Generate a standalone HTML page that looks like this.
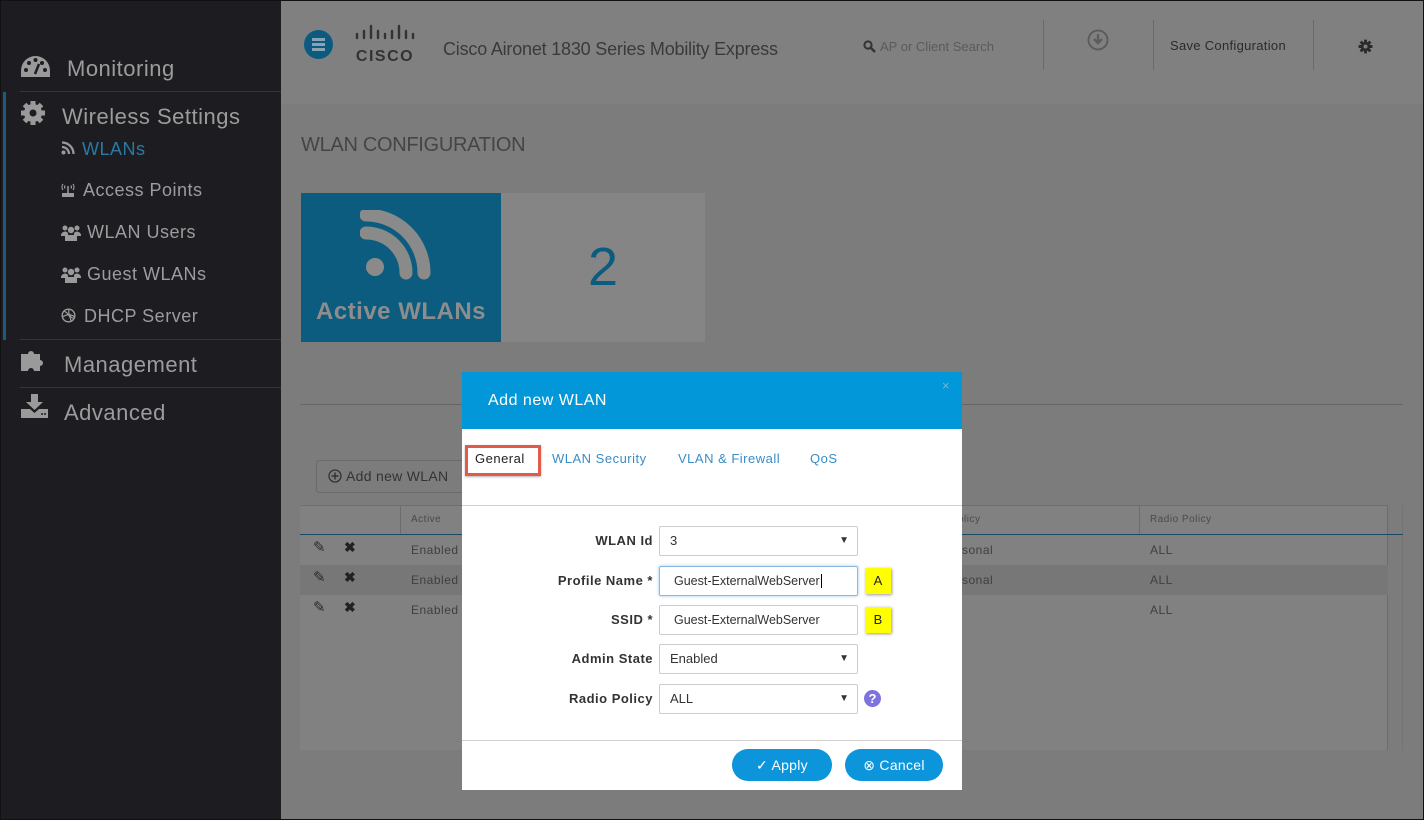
<!DOCTYPE html>
<html><head><meta charset="utf-8"><style>
*{margin:0;padding:0;box-sizing:border-box}
body{width:1424px;height:820px;overflow:hidden;background:#7c7c7c;font-family:"Liberation Sans",sans-serif;position:relative}
.a{position:absolute}
.side{left:0;top:0;width:281px;height:820px;background:#1d1d21}
.mi{position:absolute;color:#9c9c9c;font-size:22px;letter-spacing:.5px}
.si{position:absolute;color:#9c9c9c;font-size:18px;letter-spacing:.5px}
.sep{position:absolute;left:20px;width:261px;height:1px;background:#36363a}
.lab{position:absolute;width:190px;left:463px;text-align:right;font-weight:bold;font-size:13px;color:#333;letter-spacing:.5px}
.inp{position:absolute;left:659px;width:199px;height:30px;border:1px solid #ccc;border-radius:2px;background:#fff;font-size:13px;color:#333;padding-left:10px;line-height:28px}
.arr{position:absolute;right:8px;top:0;font-size:10px;color:#333}
.yb{position:absolute;left:865px;width:26px;height:26px;background:#ffff00;box-shadow:1px 1px 3px rgba(0,0,0,.4);font-size:13px;text-align:center;line-height:26px;color:#222}
.tab{position:absolute;top:451px;font-size:13px;color:#3b8cc4;letter-spacing:.5px}
.cell{position:absolute;font-size:12px;color:#3f3f3f;letter-spacing:.5px}
</style></head><body>
<div class="a side"></div>
<div class="a" style="left:3px;top:92px;width:3px;height:248px;background:#1b5b7b"></div>
<svg class="a" style="left:20px;top:55px" width="31" height="24" viewBox="0 0 31 24"><path d="M15.5 1A14.5 14.5 0 0 0 1 15.5V22h29v-6.5A14.5 14.5 0 0 0 15.5 1z" fill="#9a9a9a"/><circle cx="6" cy="15" r="2" fill="#1d1d21"/><circle cx="9" cy="8" r="2" fill="#1d1d21"/><circle cx="15.5" cy="5" r="2" fill="#1d1d21"/><circle cx="22" cy="8" r="2" fill="#1d1d21"/><circle cx="25" cy="15" r="2" fill="#1d1d21"/><path d="M15 19l4-10" stroke="#1d1d21" stroke-width="2.5"/></svg>
<div class="mi" style="left:67px;top:56px">Monitoring</div>
<div class="sep" style="top:91px"></div>
<svg class="a" style="left:20px;top:100px" width="26" height="26" viewBox="0 0 26 26"><g fill="#9a9a9a"><circle cx="13" cy="13" r="9"/><g stroke="#9a9a9a" stroke-width="5"><path d="M13 1v24M1 13h24M4.5 4.5l17 17M21.5 4.5l-17 17"/></g></g><circle cx="13" cy="13" r="3.5" fill="#1d1d21"/></svg>
<div class="mi" style="left:62px;top:104px">Wireless Settings</div>
<svg class="a" style="left:61px;top:141px" width="14" height="14" viewBox="0 0 14 14"><circle cx="2.5" cy="11.5" r="2" fill="#999"/><path d="M1 6a7 7 0 0 1 7 7M1 1.5a11.5 11.5 0 0 1 11.5 11.5" stroke="#999" stroke-width="2.3" fill="none"/></svg>
<div class="si" style="left:82px;top:139px;color:#2a79a3">WLANs</div>
<svg class="a" style="left:60px;top:182px" width="16" height="16" viewBox="0 0 16 16"><g fill="none" stroke="#9a9a9a" stroke-width="1.2"><path d="M3 2a5 5 0 0 0 0 6M5 3.5a3 3 0 0 0 0 3M13 2a5 5 0 0 1 0 6M11 3.5a3 3 0 0 1 0 3"/></g><path d="M8 4v7" stroke="#9a9a9a" stroke-width="1.5"/><rect x="2" y="11" width="12" height="4" fill="#9a9a9a"/></svg>
<div class="si" style="left:83px;top:180px">Access Points</div>
<svg class="a" style="left:61px;top:225px" width="20" height="16" viewBox="0 0 20 16"><g fill="#9a9a9a"><circle cx="4" cy="3" r="2.5"/><circle cx="16" cy="3" r="2.5"/><circle cx="10" cy="5" r="3.2"/><path d="M0 11a4 4 0 0 1 7-3v3zM20 11a4 4 0 0 0-7-3v3zM4 16a6 6 0 0 1 12 0z"/><rect x="4" y="10" width="12" height="6"/></g></svg>
<div class="si" style="left:87px;top:222px">WLAN Users</div>
<svg class="a" style="left:61px;top:267px" width="20" height="16" viewBox="0 0 20 16"><g fill="#9a9a9a"><circle cx="4" cy="3" r="2.5"/><circle cx="16" cy="3" r="2.5"/><circle cx="10" cy="5" r="3.2"/><path d="M0 11a4 4 0 0 1 7-3v3zM20 11a4 4 0 0 0-7-3v3zM4 16a6 6 0 0 1 12 0z"/><rect x="4" y="10" width="12" height="6"/></g></svg>
<div class="si" style="left:87px;top:264px">Guest WLANs</div>
<svg class="a" style="left:61px;top:308px" width="15" height="15" viewBox="0 0 15 15"><circle cx="7.5" cy="7.5" r="6.3" fill="none" stroke="#9a9a9a" stroke-width="1.4"/><path d="M3 3c4 2 7 6 7 11M1.5 9c4-3 9-3 12 0M8 1.5c-1 4 1 8 5 9" stroke="#9a9a9a" fill="none" stroke-width="1.2"/></svg>
<div class="si" style="left:84px;top:306px">DHCP Server</div>
<div class="sep" style="top:339px"></div>
<svg class="a" style="left:20px;top:346px" width="28" height="26" viewBox="0 0 28 26"><path d="M1 8h7a3 3 0 1 1 6 0h6v6a3 3 0 1 1 0 6v5h-6a3 3 0 1 0-6 0H1z" fill="#9a9a9a"/></svg>
<div class="mi" style="left:64px;top:352px">Management</div>
<div class="sep" style="top:387px"></div>
<svg class="a" style="left:20px;top:393px" width="29" height="26" viewBox="0 0 29 26"><path d="M11 1h7v8h5l-8.5 8L6 9h5z" fill="#9a9a9a"/><path d="M1 16h9l4.5 4 4.5-4h9v9H1z" fill="#9a9a9a"/><circle cx="22" cy="21" r="1" fill="#1d1d21"/><circle cx="25" cy="21" r="1" fill="#1d1d21"/></svg>
<div class="mi" style="left:64px;top:400px">Advanced</div>

<div class="a" style="left:281px;top:0;width:1143px;height:104px;background:#808080"></div>
<div class="a" style="left:304px;top:30px;width:29px;height:29px;border-radius:50%;background:#0b5b80"></div>
<div class="a" style="left:312px;top:38px;width:13px;height:2.5px;background:#8aa3b3;box-shadow:0 5px 0 #8aa3b3,0 10px 0 #8aa3b3"></div>
<svg class="a" style="left:354px;top:24px" width="72" height="40" viewBox="0 0 72 40"><g stroke="#333" stroke-width="2.4" stroke-linecap="round"><path d="M3 10v4M10 7v7M17 2v12M24 7v7M31 10v4M38 7v7M45 2v12M52 7v7M59 10v4"/></g><text x="31" y="37" text-anchor="middle" font-family="Liberation Sans" font-weight="bold" font-size="16" fill="#333" letter-spacing="1.5">CISCO</text></svg>
<div class="a" style="left:443px;top:39px;font-size:18px;color:#3a3a3a;letter-spacing:-.2px">Cisco Aironet 1830 Series Mobility Express</div>
<svg class="a" style="left:863px;top:40px" width="13" height="13" viewBox="0 0 13 13"><circle cx="5" cy="5" r="3.6" fill="none" stroke="#333" stroke-width="2"/><path d="M8 8l4 4" stroke="#333" stroke-width="2.4"/></svg>
<div class="a" style="left:880px;top:39px;font-size:13px;color:#5a5a5a">AP or Client Search</div>
<div class="a" style="left:1043px;top:20px;width:1px;height:50px;background:#6a6a6a"></div>
<div class="a" style="left:1153px;top:20px;width:1px;height:50px;background:#6a6a6a"></div>
<div class="a" style="left:1313px;top:20px;width:1px;height:50px;background:#6a6a6a"></div>
<svg class="a" style="left:1087px;top:29px" width="22" height="22" viewBox="0 0 22 22"><circle cx="11" cy="11" r="9.5" fill="none" stroke="#5c5c5c" stroke-width="2"/><path d="M11 5v9M7 10l4 4 4-4" stroke="#5c5c5c" stroke-width="2.4" fill="none"/></svg>
<div class="a" style="left:1170px;top:38px;font-size:13px;color:#2a2a2a;letter-spacing:.3px">Save Configuration</div>
<svg class="a" style="left:1358px;top:39px" width="15" height="15" viewBox="0 0 26 26"><circle cx="13" cy="13" r="8" fill="#2a2a2a"/><g stroke="#2a2a2a" stroke-width="5"><path d="M13 1v24M1 13h24M4.5 4.5l17 17M21.5 4.5l-17 17"/></g><circle cx="13" cy="13" r="3.5" fill="#808080"/></svg>

<div class="a" style="left:301px;top:134px;font-size:20px;color:#454545;letter-spacing:-.3px">WLAN CONFIGURATION</div>
<div class="a" style="left:301px;top:193px;width:200px;height:149px;background:#0b5c7e"></div>
<div class="a" style="left:501px;top:193px;width:204px;height:149px;background:#858585"></div>
<svg class="a" style="left:360px;top:210px" width="80" height="70" viewBox="0 0 80 70"><circle cx="15" cy="57" r="9" fill="#8a8a8a"/><path d="M6 23a40 40 0 0 1 40 40M6 5a58 58 0 0 1 58 58" stroke="#8a8a8a" stroke-width="13" fill="none" stroke-linecap="round"/></svg>
<div class="a" style="left:301px;top:298px;width:200px;text-align:center;font-size:24px;font-weight:bold;color:#8d8d8d;letter-spacing:.5px">Active WLANs</div>
<div class="a" style="left:501px;top:236px;width:204px;text-align:center;font-size:54px;color:#0b5c7e">2</div>
<div class="a" style="left:300px;top:404px;width:1103px;height:1px;background:#666"></div>

<div class="a" style="left:316px;top:460px;width:160px;height:33px;border:1px solid #6a6a6a;border-radius:3px"></div>
<svg class="a" style="left:328px;top:469px" width="14" height="14" viewBox="0 0 14 14"><circle cx="7" cy="7" r="6" fill="none" stroke="#333" stroke-width="1.3"/><path d="M7 3.5v7M3.5 7h7" stroke="#333" stroke-width="1.5"/></svg>
<div class="a" style="left:346px;top:468px;font-size:14px;color:#333;letter-spacing:.3px">Add new WLAN</div>

<div class="a" style="left:300px;top:505px;width:1088px;height:245px;background:#818181;border-top:1px solid #6f6f6f"></div>
<div class="a" style="left:1387px;top:505px;width:1px;height:245px;background:#6c6c6c"></div>
<div class="a" style="left:1402px;top:505px;width:1px;height:245px;background:#747474"></div>
<div class="a" style="left:400px;top:506px;width:1px;height:28px;background:#6c6c6c"></div>
<div class="a" style="left:1139px;top:506px;width:1px;height:28px;background:#6c6c6c"></div>
<div class="a" style="left:300px;top:534px;width:1103px;height:1px;background:#1c4863"></div>
<div class="a" style="left:300px;top:565px;width:1088px;height:30px;background:#777"></div>
<div class="cell" style="left:411px;top:514px;font-size:10px;color:#4a4a4a">Active</div>
<div class="cell" style="left:958px;top:514px;font-size:10px;color:#4a4a4a">olicy</div>
<div class="cell" style="left:1150px;top:514px;font-size:10px;color:#4a4a4a">Radio Policy</div>
<div class="cell" style="left:411px;top:543px">Enabled</div><div class="cell" style="left:411px;top:573px">Enabled</div><div class="cell" style="left:411px;top:603px">Enabled</div>
<div class="cell" style="left:962px;top:543px">sonal</div><div class="cell" style="left:962px;top:573px">sonal</div>
<div class="cell" style="left:1150px;top:543px">ALL</div><div class="cell" style="left:1150px;top:573px">ALL</div><div class="cell" style="left:1150px;top:603px">ALL</div>
<div class="cell" style="left:313px;top:538px;font-size:15px;color:#2a2a2a">&#x270E;</div><div class="cell" style="left:344px;top:539px;font-size:14px;color:#222;font-weight:bold">&#x2716;</div>
<div class="cell" style="left:313px;top:568px;font-size:15px;color:#2a2a2a">&#x270E;</div><div class="cell" style="left:344px;top:569px;font-size:14px;color:#222;font-weight:bold">&#x2716;</div>
<div class="cell" style="left:313px;top:598px;font-size:15px;color:#2a2a2a">&#x270E;</div><div class="cell" style="left:344px;top:599px;font-size:14px;color:#222;font-weight:bold">&#x2716;</div>

<div class="a" style="left:462px;top:372px;width:500px;height:418px;background:#fff"></div>
<div class="a" style="left:462px;top:372px;width:500px;height:57px;background:#0297d8"></div>
<div class="a" style="left:488px;top:392px;font-size:16px;color:#fff;letter-spacing:.5px">Add new WLAN</div>
<div class="a" style="left:942px;top:378px;font-size:13px;color:#6bb8e0">×</div>
<div class="a" style="left:465px;top:445px;width:76px;height:31px;border:3px solid #e25a4a;box-shadow:0 1px 2px rgba(0,0,0,.3)"></div>
<div class="tab" style="left:475px;color:#222">General</div>
<div class="tab" style="left:552px">WLAN Security</div>
<div class="tab" style="left:678px">VLAN &amp; Firewall</div>
<div class="tab" style="left:810px">QoS</div>
<div class="a" style="left:462px;top:505px;width:500px;height:1px;background:#d0d0d0"></div>
<div class="lab" style="top:533px">WLAN Id</div>
<div class="lab" style="top:573px">Profile Name *</div>
<div class="lab" style="top:612px">SSID *</div>
<div class="lab" style="top:651px">Admin State</div>
<div class="lab" style="top:691px">Radio Policy</div>
<div class="inp" style="top:526px">3<span class="arr">&#x25BC;</span></div>
<div class="inp" style="top:566px;border-color:#8ab8e0;box-shadow:0 0 3px #9cc7ee;padding-left:14px;font-size:12.5px">Guest-ExternalWebServer<span style="border-left:1px solid #000;margin-left:1px"></span></div>
<div class="inp" style="top:605px;padding-left:14px;font-size:12.5px">Guest-ExternalWebServer</div>
<div class="inp" style="top:644px">Enabled<span class="arr">&#x25BC;</span></div>
<div class="inp" style="top:684px">ALL<span class="arr">&#x25BC;</span></div>
<div class="yb" style="top:568px">A</div>
<div class="yb" style="top:607px">B</div>
<div class="a" style="left:864px;top:690px;width:17px;height:17px;border-radius:50%;background:#7d72e0;color:#fff;font-size:13px;font-weight:bold;text-align:center;line-height:17px">?</div>
<div class="a" style="left:462px;top:740px;width:500px;height:1px;background:#d0d0d0"></div>
<div class="a" style="left:732px;top:749px;width:100px;height:32px;border-radius:16px;background:#0d95dc;color:#fff;font-size:14px;line-height:32px;text-align:center;letter-spacing:.3px">&#x2713;&#xFE0E; Apply</div>
<div class="a" style="left:845px;top:749px;width:98px;height:32px;border-radius:16px;background:#0d95dc;color:#fff;font-size:14px;line-height:32px;text-align:center;letter-spacing:.3px">&#x2297; Cancel</div>
<div class="a" style="left:0;top:0;width:1424px;height:820px;border:1px solid #111;pointer-events:none"></div>
</body></html>
